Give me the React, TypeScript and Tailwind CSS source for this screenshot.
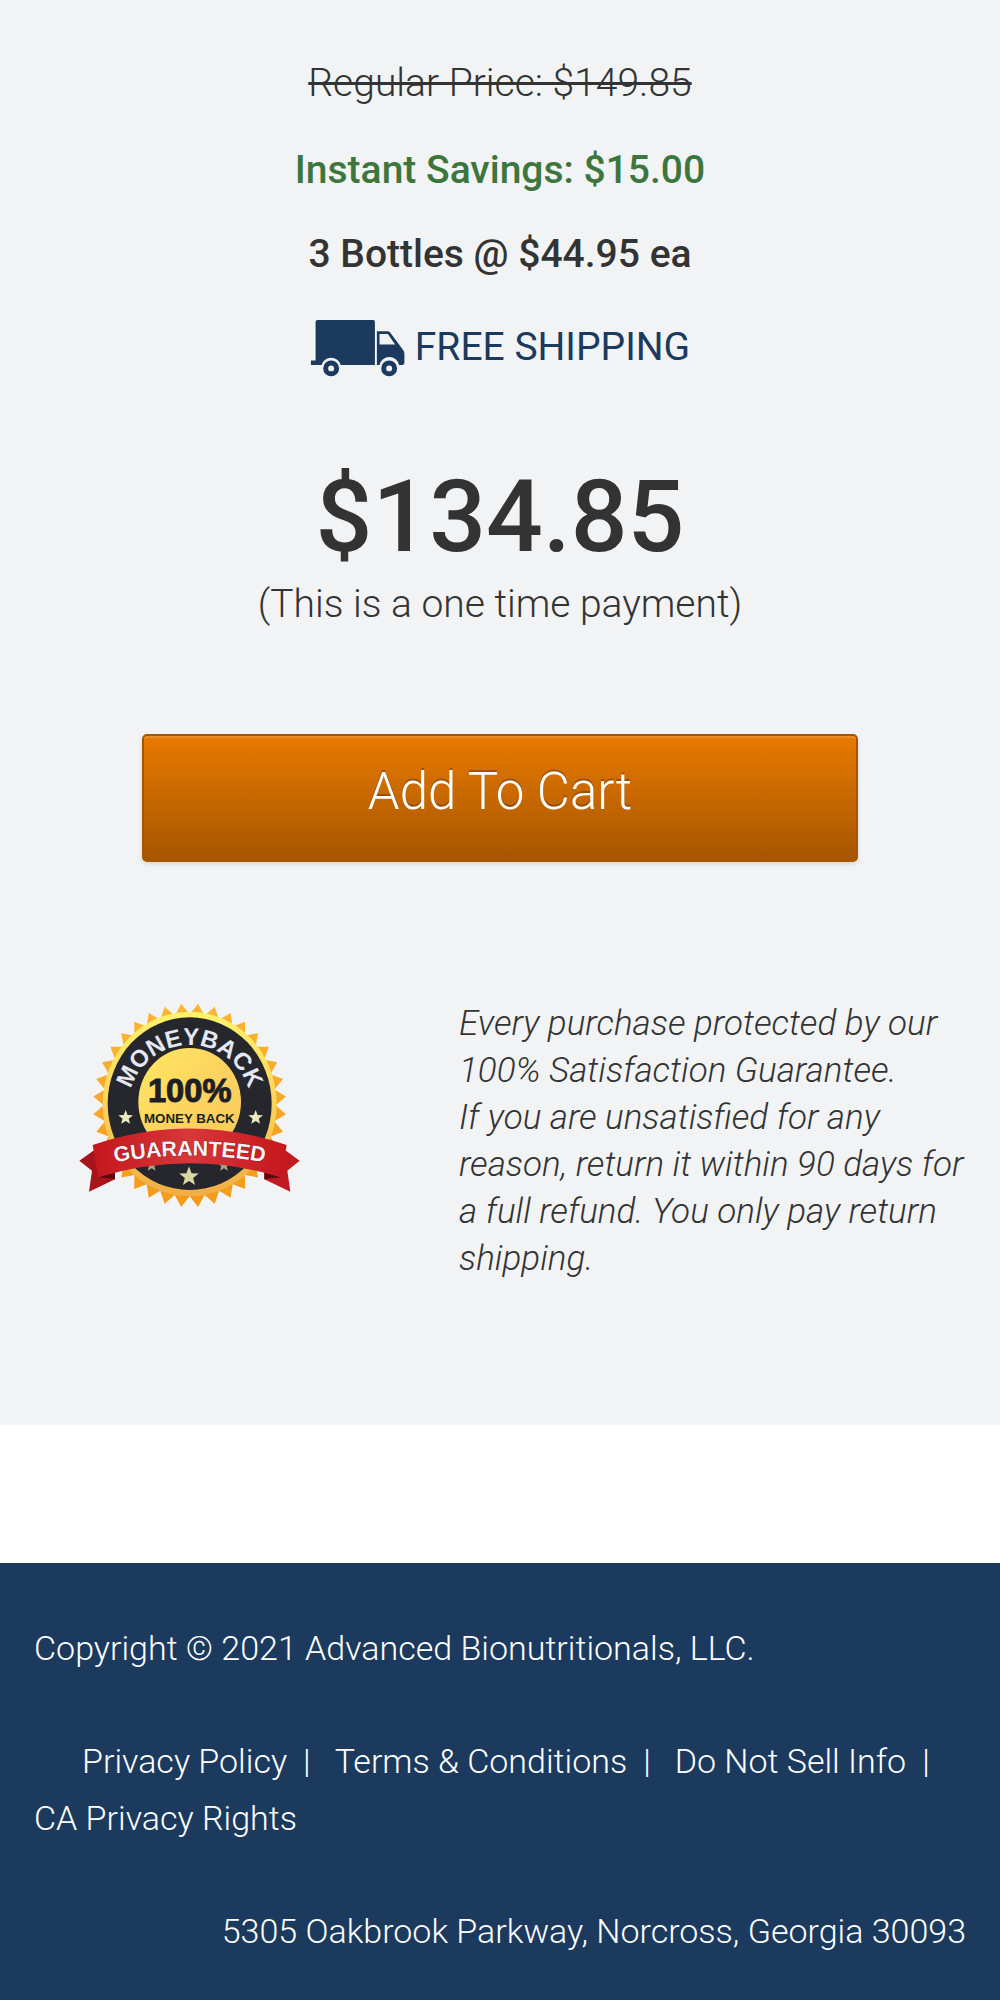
const footerLinks = ["Privacy Policy", "Terms & Conditions", "Do Not Sell Info"];

const TEETH = 36;

// zigzag outline of the seal, alternating outer and inner points
const sealPoints = Array.from({ length: TEETH * 2 }, (_, i) => {
  const angle = ((i + 1) * Math.PI) / TEETH;
  const outer = i % 2 === 0;
  const x = 389 + Math.sin(angle) * (outer ? 290 : 258);
  const y = 376 - Math.cos(angle) * (outer ? 306 : 273);
  return `${x.toFixed(1)},${y.toFixed(1)}`;
}).join(" ");

const starPoints = (cx: number, cy: number, r: number) =>
  Array.from({ length: 10 }, (_, i) => {
    const angle = (i * Math.PI) / 5;
    const radius = i % 2 === 0 ? r : r * 0.42;
    return `${(cx + Math.sin(angle) * radius).toFixed(1)},${(cy - Math.cos(angle) * radius).toFixed(1)}`;
  }).join(" ");

const TruckIcon = () => (
  <svg viewBox="57 60 285 175" className="h-[58px] w-[95px] shrink-0" fill="#1b3a5d" aria-hidden="true">
    <path d="M79 63H247Q252 63 252 68V199H149A30 30 0 0 0 91 199H59V185H73V69Q73 63 79 63Z" />
    <path
      fillRule="evenodd"
      d="M258 97H290Q295 97 298 101L336 152Q341 158 341 164V192Q341 199 334 199H325A30 30 0 0 0 266 199H258ZM266 105V137H313L291 105Z"
    />
    <path fillRule="evenodd" d="M120 185A24 24 0 1 0 120 233A24 24 0 1 0 120 185ZM120 200A9 9 0 1 1 120 218A9 9 0 1 1 120 200Z" />
    <path fillRule="evenodd" d="M295 185A24 24 0 1 0 295 233A24 24 0 1 0 295 185ZM295 200A9 9 0 1 1 295 218A9 9 0 1 1 295 200Z" />
  </svg>
);

const GuaranteeSeal = () => (
  <svg viewBox="51 60 678 630" className="h-[210px] w-[226px]" role="img" aria-label="100% money back guaranteed">
    <defs>
      <linearGradient id="teeth" x1="0" y1="0" x2="0" y2="1">
        <stop offset="0" stopColor="#fdb533" />
        <stop offset="1" stopColor="#f39a1b" />
      </linearGradient>
      <linearGradient id="rim" x1="0" y1="0" x2="0" y2="1">
        <stop offset="0" stopColor="#fff36e" />
        <stop offset="0.5" stopColor="#fbd45c" />
        <stop offset="1" stopColor="#f0ae45" />
      </linearGradient>
      <linearGradient id="core" x1="0" y1="0" x2="1" y2="1">
        <stop offset="0" stopColor="#ffe862" />
        <stop offset="0.5" stopColor="#fdd35f" />
        <stop offset="1" stopColor="#f9c95c" />
      </linearGradient>
      <linearGradient id="ribbon" x1="0" y1="0" x2="1" y2="0">
        <stop offset="0" stopColor="#c5161d" />
        <stop offset="0.5" stopColor="#d8373a" />
        <stop offset="1" stopColor="#c5161d" />
      </linearGradient>
      <path id="topArc" d="M206 378A183 183 0 0 1 572 378" />
      <path id="ribbonArc" d="M110 558Q389 496 668 558" />
    </defs>

    <polygon points={sealPoints} fill="url(#teeth)" />
    <ellipse cx="389" cy="372" rx="261" ry="277" fill="url(#rim)" />
    <ellipse cx="389" cy="371" rx="246" ry="259" fill="#25272c" />
    <ellipse cx="389" cy="366" rx="154" ry="162" fill="url(#core)" />

    <text fill="#e4e8f2" fontSize="72" fontWeight="700" fontFamily="Liberation Sans, sans-serif" textAnchor="middle">
      <textPath href="#topArc" startOffset="50%">MONEYBACK</textPath>
    </text>
    <text x="389" y="365" fill="#1d1f24" stroke="#1d1f24" strokeWidth="3" fontSize="98" fontWeight="700" fontFamily="Liberation Sans, sans-serif" textAnchor="middle">
      100%
    </text>
    <text x="388" y="428" fill="#1d1f24" fontSize="40" fontWeight="700" fontFamily="Liberation Sans, sans-serif" textAnchor="middle">
      MONEY BACK
    </text>

    <g fill="#eceabf">
      <polygon points={starPoints(197, 413, 23)} />
      <polygon points={starPoints(587, 413, 23)} />
      <polygon points={starPoints(275, 556, 20)} fill="#a9a68a" />
      <polygon points={starPoints(492, 556, 20)} fill="#a9a68a" />
      <polygon points={starPoints(387, 590, 31)} fill="#d9d6a4" />
    </g>

    <path d="M100 512L58 542L96 572L87 635L165 598L165 540Z" fill="#a8141c" />
    <path d="M678 512L719 542L682 572L691 635L613 598L613 540Z" fill="#c21a21" />
    <path d="M115 592L165 577L165 598Z" fill="#5f080c" />
    <path d="M663 592L613 577L613 598Z" fill="#5f080c" />
    <path d="M98 495Q389 396 680 495L663 592Q389 508 115 592Z" fill="url(#ribbon)" />
    <text fill="#f3f4f8" stroke="#6d1217" strokeWidth="2" paintOrder="stroke" fontSize="64" fontWeight="700" fontFamily="Liberation Sans, sans-serif" textAnchor="middle">
      <textPath href="#ribbonArc" startOffset="50%">GUARANTEED</textPath>
    </text>
  </svg>
);

const App = () => {
  return (
    <div className="bg-white font-['Roboto',sans-serif] font-light text-[#333]">
      <main className="bg-[#f1f3f5] pt-[55px] pb-[143px]">
        <section className="flex flex-col items-center text-center text-[39px] leading-[56px]">
          <p className="line-through">Regular Price: $149.85</p>
          <p className="mt-[31px] font-medium text-[#3c763d]">Instant Savings: $15.00</p>
          <p className="mt-7 font-medium">3 Bottles @ $44.95 ea</p>
          <div className="mt-[37px] flex items-start gap-2.5 font-normal text-[#1b3a5d]">
            <TruckIcon />
            <span>FREE SHIPPING</span>
          </div>
          <p className="mt-[81px] text-[100px] leading-[118px] font-medium">$134.85</p>
          <p>(This is a one time payment)</p>
          <button
            type="button"
            className="mt-[102px] h-32 w-[716px] max-w-full cursor-pointer rounded-[5px] border-2 border-[#a65600] bg-linear-to-b from-[#e87a00] to-[#a65600] pb-3 text-[51px] shadow-[inset_0_2px_0_rgba(255,255,255,0.15),0_2px_4px_rgba(0,0,0,0.12)] text-white [text-shadow:0_-2px_0_rgba(0,0,0,0.25)]"
          >
            Add To Cart
          </button>
        </section>

        <section className="mt-[138px] flex items-start pr-8 pl-[77px]">
          <div className="w-[382px] shrink-0">
            <GuaranteeSeal />
          </div>
          <p className="text-[35px] leading-[47px] italic">
            Every purchase protected by our 100% Satisfaction Guarantee.
            <br />
            If you are unsatisfied for any reason, return it within 90 days for a full refund. You only pay return
            shipping.
          </p>
        </section>
      </main>

      <footer className="mt-[138px] bg-[#1b3a5d] px-[34px] pt-[57px] pb-11 text-[34px] leading-[57px] text-white">
        <p>Copyright © 2021 Advanced Bionutritionals, LLC.</p>
        <nav className="mt-14 flex flex-wrap">
          {footerLinks.map((label) => (
            <span key={label} className="mr-6 first:ml-12">
              <a href="#">{label}</a>
              <span className="ml-4">|</span>
            </span>
          ))}
          <a href="#">CA Privacy Rights</a>
        </nav>
        <p className="mt-14 text-right">5305 Oakbrook Parkway, Norcross, Georgia 30093</p>
      </footer>
    </div>
  );
};

export default App;
